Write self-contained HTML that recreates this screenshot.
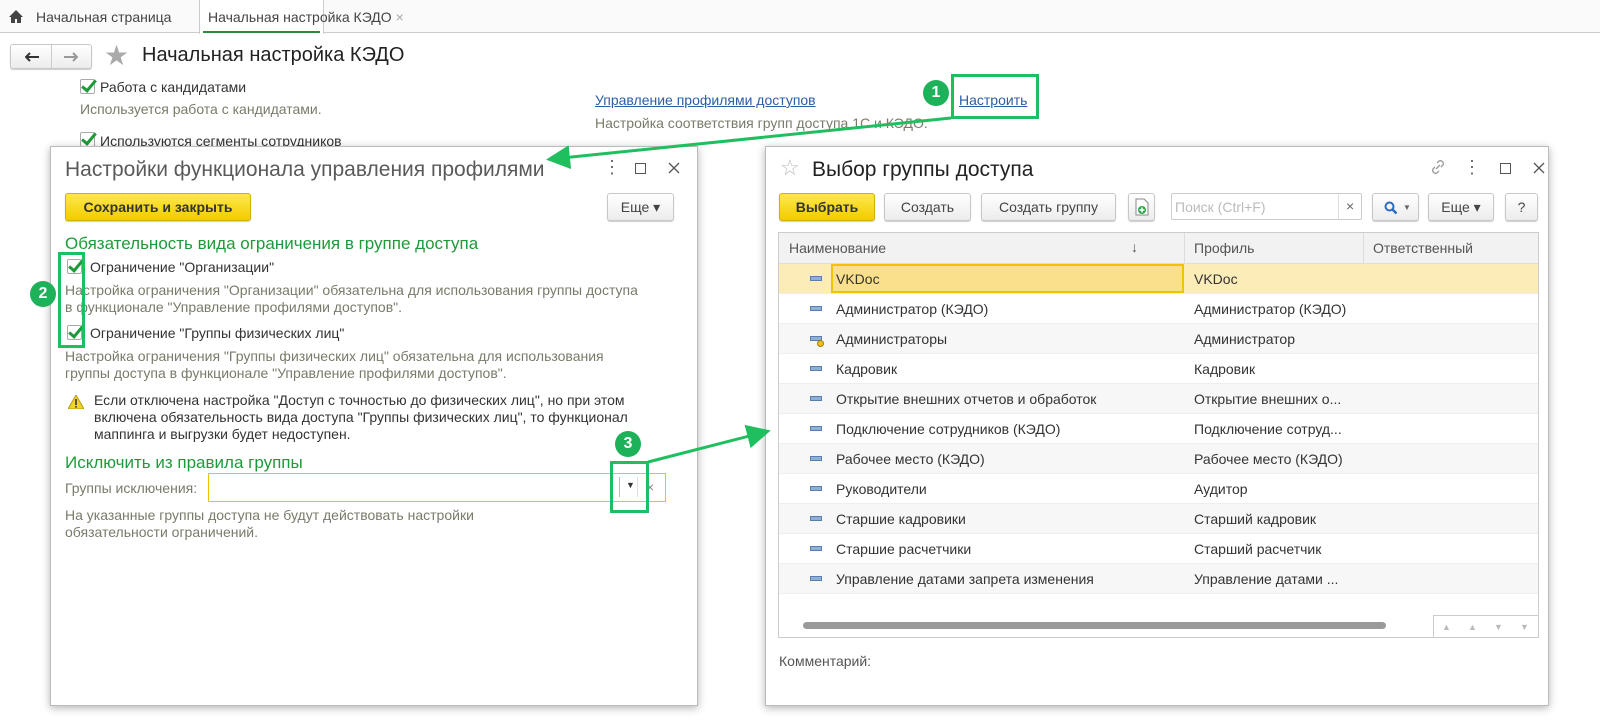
<!DOCTYPE html>
<html><head><meta charset="utf-8"><style>
*{box-sizing:border-box;margin:0;padding:0}
body{width:1600px;height:722px;position:relative;background:#fff;font-family:"Liberation Sans",Arial,sans-serif;font-size:14px;color:#333;overflow:hidden}
.a{position:absolute;white-space:nowrap}
.g{color:#7a7a6a}
.btn{position:absolute;border:1px solid #c8c8c8;border-radius:3px;background:linear-gradient(#fff,#ececec);box-shadow:0 1px 1px rgba(0,0,0,.2);text-align:center;line-height:26px;height:28px;color:#444}
.yb{background:linear-gradient(#ffe84a,#f2cc00);border-color:#d4b000;font-weight:bold;color:#333}
.cb{position:absolute;width:15px;height:15px;border:1px solid #aaa;border-radius:2px;background:#fff}
.cb:after{content:"";position:absolute;left:4px;top:-3px;width:5px;height:12px;border:solid #1f9a3a;border-width:0 3px 3px 0;transform:rotate(40deg)}
.gh{color:#1d9b3a;font-size:17px}
.dlg{position:absolute;background:#fff;border:1px solid #bbb;box-shadow:0 2px 8px rgba(0,0,0,.3)}
.circ{position:absolute;width:26px;height:26px;border-radius:50%;background:#1db15a;color:#fff;font-weight:bold;font-size:16px;text-align:center;line-height:26px}
.gbox{position:absolute;border:3px solid #1fbf5f}
.row{position:absolute;left:0;width:760px;height:30px;border-bottom:1px solid #eee}
.row span{position:absolute;top:7px}
.ic{position:absolute;left:31px;top:12px;width:12px;height:5px;background:#8fb0d6;border:1px solid #5a7fae}
</style></head><body>
<div class="a" style="left:0;top:0;width:1600px;height:33px;background:#fafafa;border-bottom:1px solid #ccc"></div>
<svg class="a" style="left:9px;top:10px" width="14" height="13"><path d="M7 0L0 7h2v6h4V9h2v4h4V7h2z" fill="#444"/></svg>
<div class="a" style="left:36px;top:9px;color:#444">Начальная страница</div>
<div class="a" style="left:199px;top:0;width:125px;height:34px;background:#fff;border-left:1px solid #ccc;border-right:1px solid #ccc"></div>
<div class="a" style="left:203px;top:31px;width:117px;height:2px;background:#2a8a3a"></div>
<div class="a" style="left:208px;top:9px;color:#444">Начальная настройка КЭДО <span style="color:#aaa">×</span></div>
<div class="btn" style="left:10px;top:44px;width:82px;height:25px">
<svg class="a" style="left:14px;top:7px" width="14" height="10"><path d="M1 5h13M5 1L1 5l4 4" stroke="#333" stroke-width="2" fill="none"/></svg>
<span class="a" style="left:40px;top:0;width:1px;height:23px;background:#ccc"></span>
<svg class="a" style="left:53px;top:7px" width="14" height="10"><path d="M0 5h12M9 1l4 4-4 4" stroke="#999" stroke-width="2" fill="none"/></svg></div>
<div class="a" style="left:104px;top:39px;font-size:28px;color:#aaa">★</div>
<div class="a" style="left:142px;top:44px;font-size:20px;color:#222">Начальная настройка КЭДО</div>
<div class="cb" style="left:80px;top:79px"></div>
<div class="a" style="left:100px;top:79px">Работа с кандидатами</div>
<div class="a g" style="left:80px;top:101px">Используется работа с кандидатами.</div>
<div class="cb" style="left:80px;top:132px"></div>
<div class="a" style="left:100px;top:133px">Используются сегменты сотрудников</div>
<div class="a" style="left:595px;top:92px;color:#2a5ea8;text-decoration:underline">Управление профилями доступов</div>
<div class="a" style="left:959px;top:92px;color:#2a5ea8;text-decoration:underline">Настроить</div>
<div class="a g" style="left:595px;top:115px">Настройка соответствия групп доступа 1С и КЭДО.</div>
<div class="gbox" style="left:951px;top:74px;width:88px;height:45px"></div>
<div class="circ" style="left:923px;top:80px">1</div>

<div class="dlg" style="left:50px;top:146px;width:648px;height:560px">
<div class="a" style="left:14px;top:11px;font-size:21px;color:#5a5a5a">Настройки функционала управления профилями</div>
<div class="a" style="left:552px;top:10px;font-size:18px;color:#666">⋮</div>
<div class="a" style="left:584px;top:16px;width:11px;height:11px;border:1px solid #555"></div>
<svg class="a" style="left:617px;top:15px" width="12" height="12"><path d="M1 1l10 10M11 1L1 11" stroke="#555" stroke-width="1.3"/></svg>
<div class="btn yb" style="left:14px;top:46px;width:186px">Сохранить и закрыть</div>
<div class="btn" style="left:556px;top:46px;width:67px">Еще ▾</div>
<div class="a gh" style="left:14px;top:87px">Обязательность вида ограничения в группе доступа</div>
<div class="cb" style="left:16px;top:112px"></div>
<div class="a" style="left:39px;top:112px">Ограничение "Организации"</div>
<div class="a g" style="left:14px;top:135px;line-height:17px">Настройка ограничения "Организации" обязательна для использования группы доступа<br>в функционале "Управление профилями доступов".</div>
<div class="cb" style="left:16px;top:178px"></div>
<div class="a" style="left:39px;top:178px">Ограничение "Группы физических лиц"</div>
<div class="a g" style="left:14px;top:201px;line-height:17px">Настройка ограничения "Группы физических лиц" обязательна для использования<br>группы доступа в функционале "Управление профилями доступов".</div>
<svg class="a" style="left:17px;top:248px" width="16" height="14"><path d="M8 0L16 14H0z" fill="#f2d22e" stroke="#b59a10"/><rect x="7.2" y="4" width="1.6" height="6" fill="#333"/><rect x="7.2" y="11" width="1.6" height="1.6" fill="#333"/></svg>
<div class="a" style="left:43px;top:245px;line-height:17px;color:#333">Если отключена настройка "Доступ с точностью до физических лиц", но при этом<br>включена обязательность вида доступа "Группы физических лиц", то функционал<br>маппинга и выгрузки будет недоступен.</div>
<div class="a gh" style="left:14px;top:306px">Исключить из правила группы</div>
<div class="a g" style="left:14px;top:333px">Группы исключения:</div>
<div class="a" style="left:157px;top:326px;width:458px;height:29px;border:1px solid #f2c200"></div>
<div class="a" style="left:568px;top:330px;width:1px;height:20px;background:#bbb"></div>
<div class="a" style="left:575px;top:333px;font-size:9px">▼</div>
<div class="a" style="left:586px;top:330px;width:1px;height:20px;background:#ddd"></div>
<div class="a" style="left:595px;top:332px;color:#888">×</div>
<div class="a g" style="left:14px;top:360px;line-height:17px">На указанные группы доступа не будут действовать настройки<br>обязательности ограничений.</div>
</div>
<div class="gbox" style="left:58px;top:252px;width:27px;height:96px"></div>
<div class="circ" style="left:30px;top:281px">2</div>
<div class="gbox" style="left:610px;top:461px;width:39px;height:52px"></div>
<div class="circ" style="left:615px;top:431px">3</div>

<div class="dlg" style="left:765px;top:146px;width:784px;height:560px">
<div class="a" style="left:14px;top:8px;font-size:22px;color:#bbb">☆</div>
<div class="a" style="left:46px;top:11px;font-size:21px;color:#222">Выбор группы доступа</div>
<svg class="a" style="left:663px;top:11px" width="18" height="18"><path d="M7 11l4-4M8 5l2-2a3 3 0 014 4l-2 2M10 13l-2 2a3 3 0 01-4-4l2-2" stroke="#999" stroke-width="1.3" fill="none"/></svg>
<div class="a" style="left:697px;top:10px;font-size:18px;color:#666">⋮</div>
<div class="a" style="left:734px;top:16px;width:11px;height:11px;border:1px solid #555"></div>
<svg class="a" style="left:767px;top:15px" width="12" height="12"><path d="M1 1l10 10M11 1L1 11" stroke="#555" stroke-width="1.3"/></svg>
<div class="btn yb" style="left:13px;top:46px;width:96px">Выбрать</div>
<div class="btn" style="left:118px;top:46px;width:87px">Создать</div>
<div class="btn" style="left:215px;top:46px;width:135px">Создать группу</div>
<div class="btn" style="left:362px;top:46px;width:27px"><svg width="14" height="18" style="margin-top:4px"><path d="M1 1h8l4 4v12H1z" fill="#fff" stroke="#888"/><circle cx="7" cy="12" r="4" fill="#2aa84a"/><path d="M7 9.5v5M4.5 12h5" stroke="#fff" stroke-width="1.5"/></svg></div>
<div class="a" style="left:405px;top:46px;width:191px;height:27px;border:1px solid #ccc;border-radius:2px"><span style="position:absolute;left:3px;top:5px;color:#bbb">Поиск (Ctrl+F)</span><span style="position:absolute;left:166px;top:0;width:1px;height:25px;background:#ddd"></span><span style="position:absolute;left:174px;top:4px;color:#666">×</span></div>
<div class="btn" style="left:606px;top:46px;width:47px"><svg class="a" style="left:11px;top:7px" width="14" height="14"><circle cx="5.5" cy="5.5" r="4" stroke="#2a6cc0" stroke-width="2" fill="none"/><path d="M8.5 8.5l4 4" stroke="#2a6cc0" stroke-width="2.5"/></svg><span class="a" style="left:30px;top:1px;color:#666;font-size:8px">▼</span></div>
<div class="btn" style="left:662px;top:46px;width:66px">Еще ▾</div>
<div class="btn" style="left:739px;top:46px;width:33px">?</div>
<div class="a" style="left:12px;top:85px;width:761px;height:406px;border:1px solid #ccc;overflow:hidden">
 <div class="a" style="left:0;top:0;width:761px;height:31px;background:#f2f2f2;border-bottom:1px solid #ddd;color:#555">
  <span class="a" style="left:10px;top:7px">Наименование</span><span class="a" style="left:352px;top:6px">↓</span>
  <span class="a" style="left:405px;top:0;width:1px;height:31px;background:#ddd"></span>
  <span class="a" style="left:415px;top:7px">Профиль</span>
  <span class="a" style="left:584px;top:0;width:1px;height:31px;background:#ddd"></span>
  <span class="a" style="left:594px;top:7px">Ответственный</span></div>
 <div class="row" style="top:31px;background:#fbecb8"><i class="ic"></i><span style="left:52px;top:0;width:353px;height:29px;border:2px solid #f2c200;background:#fae08c;padding:5px 0 0 3px">VKDoc</span><span style="left:415px">VKDoc</span></div>
 <div class="row" style="top:61px"><i class="ic"></i><span style="left:57px">Администратор (КЭДО)</span><span style="left:415px">Администратор (КЭДО)</span></div>
 <div class="row" style="top:91px;background:#f7f7f7"><i class="ic"></i><i class="a" style="left:38px;top:16px;width:7px;height:7px;border-radius:50%;background:#f0c020;border:1px solid #a08000"></i><span style="left:57px">Администраторы</span><span style="left:415px">Администратор</span></div>
 <div class="row" style="top:121px"><i class="ic"></i><span style="left:57px">Кадровик</span><span style="left:415px">Кадровик</span></div>
 <div class="row" style="top:151px;background:#f7f7f7"><i class="ic"></i><span style="left:57px">Открытие внешних отчетов и обработок</span><span style="left:415px">Открытие внешних о...</span></div>
 <div class="row" style="top:181px"><i class="ic"></i><span style="left:57px">Подключение сотрудников (КЭДО)</span><span style="left:415px">Подключение сотруд...</span></div>
 <div class="row" style="top:211px;background:#f7f7f7"><i class="ic"></i><span style="left:57px">Рабочее место (КЭДО)</span><span style="left:415px">Рабочее место (КЭДО)</span></div>
 <div class="row" style="top:241px"><i class="ic"></i><span style="left:57px">Руководители</span><span style="left:415px">Аудитор</span></div>
 <div class="row" style="top:271px;background:#f7f7f7"><i class="ic"></i><span style="left:57px">Старшие кадровики</span><span style="left:415px">Старший кадровик</span></div>
 <div class="row" style="top:301px"><i class="ic"></i><span style="left:57px">Старшие расчетчики</span><span style="left:415px">Старший расчетчик</span></div>
 <div class="row" style="top:331px;background:#f7f7f7"><i class="ic"></i><span style="left:57px">Управление датами запрета изменения</span><span style="left:415px">Управление датами ...</span></div>
 <div class="a" style="left:24px;top:389px;width:583px;height:7px;border-radius:4px;background:#9a9a9a"></div>
 <div class="a" style="left:654px;top:382px;width:107px;height:24px;border-top:1px solid #ccc;border-left:1px solid #ccc;color:#bbb;font-size:9px;line-height:22px"><span class="a" style="left:8px">▲</span><span class="a" style="left:34px">▲</span><span class="a" style="left:60px">▼</span><span class="a" style="left:86px">▼</span></div>
</div>
<div class="a" style="left:13px;top:506px;color:#555">Комментарий:</div>
</div>

<svg class="a" style="left:0;top:0" width="1600" height="722">
<defs><marker id="m" markerWidth="8" markerHeight="8" refX="6" refY="4" orient="auto"><path d="M0 0L8 4L0 8z" fill="#1fbf5f"/></marker></defs>
<line x1="951" y1="118" x2="552" y2="159" stroke="#1fbf5f" stroke-width="3" marker-end="url(#m)"/>
<line x1="648" y1="462" x2="765" y2="432" stroke="#1fbf5f" stroke-width="3" marker-end="url(#m)"/>
</svg>
</body></html>
